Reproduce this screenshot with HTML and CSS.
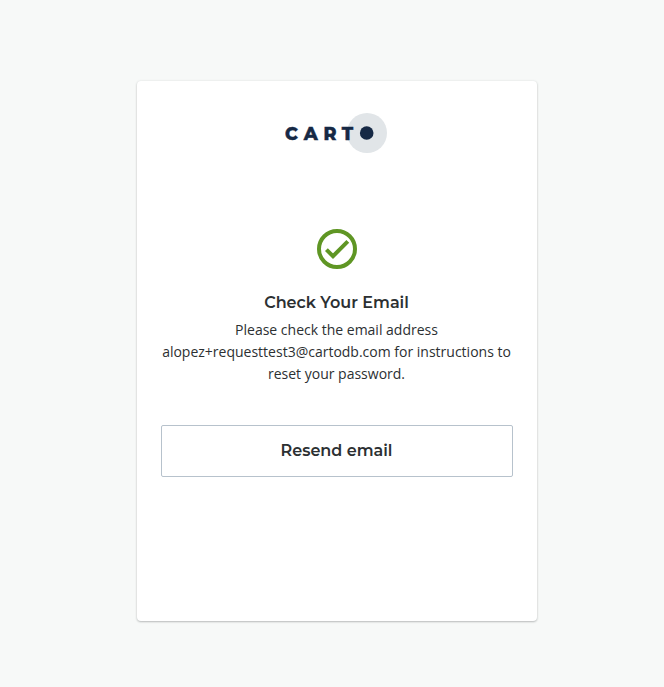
FILE: index.html
```html
<!DOCTYPE html>
<html lang="en">
<head>
<meta charset="utf-8">
<title>Check Your Email</title>
<link rel="stylesheet" href="styles.css">
</head>
<body>
<main class="card">
  <svg class="logo" width="102" height="40" viewBox="0 0 102 40" role="img" aria-label="CARTO">
    <circle class="logo-halo" cx="82" cy="20" r="20"/>
    <circle class="logo-dot" cx="81.7" cy="20" r="6.8"/>
    <g class="logo-letters">
      <text x="0" y="26.5" textLength="12.8" lengthAdjust="spacingAndGlyphs">C</text>
      <text x="18.7" y="26.5" textLength="14" lengthAdjust="spacingAndGlyphs">A</text>
      <text x="38.4" y="26.5" textLength="13" lengthAdjust="spacingAndGlyphs">R</text>
      <text x="56.8" y="26.5" textLength="11.4" lengthAdjust="spacingAndGlyphs">T</text>
    </g>
  </svg>
  <svg class="check" width="40" height="40" viewBox="0 0 40 40" aria-hidden="true">
    <circle cx="20" cy="20" r="18"/>
    <path d="M9.4 20.6 16 27.2 30.8 12.4"/>
  </svg>
  <h1 class="title">Check Your Email</h1>
  <p class="message">Please check the email address alopez+requesttest3@cartodb.com for instructions to reset your password.</p>
  <button class="resend" type="button"><span>Resend email</span></button>
</main>
</body>
</html>
```
FILE: styles.css
```css
* { box-sizing: border-box; }

body {
  margin: 0;
  min-height: 687px;
  padding: 81px 0 0 137px;
  background: #f7f9f8;
  color: #2c3032;
  font-family: "Open Sans", "Noto Sans", sans-serif;
}

.card {
  display: flex;
  flex-direction: column;
  align-items: center;
  width: 400px;
  height: 540px;
  padding: 32px 24px;
  background: #fff;
  border-radius: 4px;
  box-shadow: 0 1px 2px rgba(44, 48, 50, .28), 0 0 3px rgba(44, 48, 50, .08);
}

.logo { margin-left: -2px; }
.logo-halo { fill: #e1e5e8; }
.logo-dot { fill: #162945; }
.logo-letters {
  fill: #162945;
  stroke: #162945;
  stroke-width: .4;
  font: 800 18.2px Montserrat, Inter, sans-serif;
}

.check {
  margin-top: 76px;
  fill: none;
  stroke: #5f9624;
  stroke-width: 4;
}

.title {
  margin: 22px 1px 0 0;
  font: 600 16px/24px Montserrat, Inter, sans-serif;
}

.message {
  width: 352px;
  margin: 4px 0 0;
  padding-right: 1px;
  font-size: 14px;
  line-height: 22px;
  text-align: center;
}

.resend {
  width: 352px;
  height: 52px;
  margin-top: 40px;
  padding: 0 1px 0 0;
  background: #fff;
  border: 1px solid #b7c2cc;
  border-radius: 2px;
  color: inherit;
  font: 600 16px/24px Montserrat, Inter, sans-serif;
}
```
